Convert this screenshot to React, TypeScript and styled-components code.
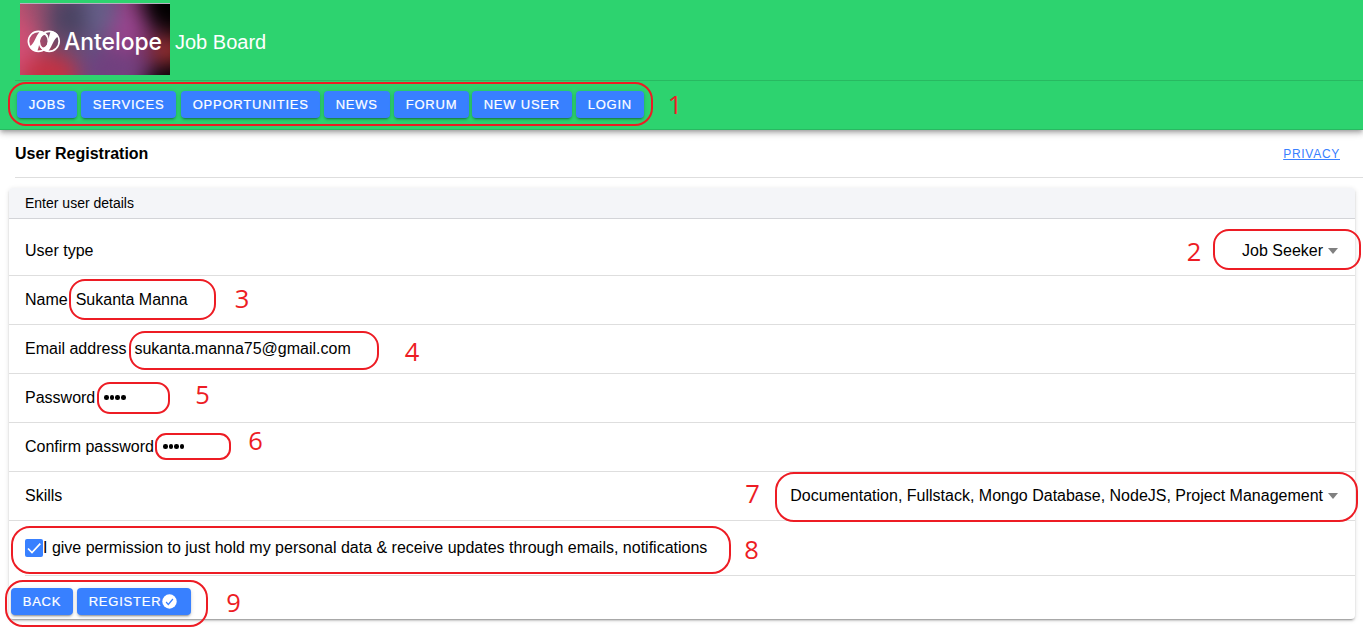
import React from 'react';
import styled, { createGlobalStyle } from 'styled-components';

const GlobalStyle = createGlobalStyle`
  * { box-sizing: border-box; }
  body {
    margin: 0;
    background: #fff;
    color: #000;
    font-family: "Liberation Sans", Arial, sans-serif;
    font-size: 16px;
    overflow: hidden;
  }
`;

const Page = styled.div`
  position: relative;
  display: flex;
  flex-direction: column;
  height: 637px;
  overflow: hidden;
`;

const Header = styled.header`
  background: #2dd36f;
  height: 130px;
  border-bottom: 1px solid #28b961;
  box-shadow: 0 2px 4px -1px rgba(0, 0, 0, 0.25), 0 4px 5px rgba(0, 0, 0, 0.14), 0 1px 10px rgba(0, 0, 0, 0.12);
`;

const Brand = styled.div`
  display: flex;
  align-items: center;
  height: 81px;
  margin-left: 15px;
  padding: 3px 0 5px 5px;
  border-bottom: 1px solid #28b961;
`;

const BrandTitle = styled.h1`
  margin: 6px 0 0 5px;
  color: #fff;
  font-size: 20px;
  font-weight: 400;
  line-height: 24px;
`;

const Nav = styled.nav`
  display: flex;
  padding: 10px 0 0 17px;
`;

const Button = styled.button<{ $width: number; $gap?: number }>`
  display: flex;
  align-items: center;
  justify-content: flex-start;
  width: ${(p) => p.$width}px;
  height: 27px;
  margin: 0 ${(p) => p.$gap ?? 4}px 0 0;
  padding: 0 0 0 11.7px;
  border: 0;
  border-radius: 4px;
  background: #3880ff;
  color: #fff;
  font: 400 13px "Liberation Sans", Arial, sans-serif;
  letter-spacing: 0.78px;
  -webkit-text-stroke: 0.2px #fff;
  white-space: nowrap;
  box-shadow: 0 3px 1px -2px rgba(0, 0, 0, 0.2), 0 2px 2px rgba(0, 0, 0, 0.14), 0 1px 5px rgba(0, 0, 0, 0.12);

  svg {
    margin-left: 1px;
  }
`;

const TitleBar = styled.div`
  display: flex;
  justify-content: space-between;
  align-items: center;
  height: 48px;
  margin-left: 15px;
  padding-right: 23px;
  border-bottom: 1px solid #dedede;
`;

const Title = styled.h2`
  margin: 0;
  font-size: 16px;
  font-weight: 700;
`;

const PrivacyLink = styled.a`
  color: #3880ff;
  font-size: 12px;
  letter-spacing: 0.72px;
  text-decoration: underline;
`;

const Card = styled.section`
  width: 1346px;
  height: 431px;
  margin: 10px 0 0 9px;
  border-radius: 4px;
  overflow: hidden;
  background: #fff;
  box-shadow: 0 3px 1px -2px rgba(0, 0, 0, 0.2), 0 2px 2px rgba(0, 0, 0, 0.14), 0 1px 5px rgba(0, 0, 0, 0.12);
`;

const CardHeader = styled.div`
  height: 31px;
  padding-left: 16px;
  border-bottom: 1px solid #d3d4d8;
  background: #f4f5f8;
  font-size: 14px;
  line-height: 31px;
`;

const Row = styled.div<{ $height?: number; $top?: number }>`
  display: flex;
  align-items: flex-start;
  height: ${(p) => p.$height ?? 49}px;
  padding: ${(p) => p.$top ?? 15}px 17px 0 16px;
  border-bottom: 1px solid #dedede;
  line-height: 18px;
  white-space: nowrap;
`;

const Value = styled.span<{ $gap: number }>`
  margin-left: ${(p) => p.$gap}px;
`;

const Select = styled.div`
  display: flex;
  align-items: center;
  margin-left: auto;
`;

const Caret = styled.span`
  margin-left: 5px;
  border: 5px solid transparent;
  border-top: 6px solid #808080;
  border-bottom: 0;
`;

const Dots = styled.span<{ $gap: number }>`
  display: flex;
  gap: 1px;
  margin: 6px 0 0 ${(p) => p.$gap}px;
`;

const Dot = styled.i`
  width: 4.6px;
  height: 4.6px;
  border-radius: 50%;
  background: #000;
`;

const Checkbox = styled.span`
  display: flex;
  width: 18px;
  height: 18px;
  border-radius: 2px;
  background: #3880ff;
`;

const ConsentRow = styled(Row)`
  margin-left: 16px;
  padding-left: 0;
`;

const Actions = styled.div`
  display: flex;
  padding: 12px 0 0 2px;
`;

const Outline = styled.div<{ $x: number; $y: number; $w: number; $h: number; $r: number }>`
  position: absolute;
  left: ${(p) => p.$x}px;
  top: ${(p) => p.$y}px;
  width: ${(p) => p.$w}px;
  height: ${(p) => p.$h}px;
  border: 2px solid #ed1c24;
  border-radius: ${(p) => p.$r}px;
  pointer-events: none;
`;

const Marker = styled.span<{ $x: number; $y: number }>`
  position: absolute;
  left: ${(p) => p.$x}px;
  top: ${(p) => p.$y}px;
  width: 20px;
  color: #ed1c24;
  font: 400 25.5px/30px "Open Sans", "Noto Sans", sans-serif;
  text-align: center;
`;

const Logo = () => (
  <svg width="150" height="72" viewBox="0 0 150 72">
    <defs>
      <linearGradient id="base" x1="0" y1="0" x2="1" y2="0">
        <stop offset="0" stopColor="#b55270" />
        <stop offset="0.25" stopColor="#704a6b" />
        <stop offset="0.5" stopColor="#655080" />
        <stop offset="0.7" stopColor="#8a3d7c" />
        <stop offset="0.85" stopColor="#6a2c58" />
        <stop offset="1" stopColor="#37121e" />
      </linearGradient>
      <filter id="soft" filterUnits="userSpaceOnUse" x="-60" y="-60" width="270" height="192" colorInterpolationFilters="sRGB">
        <feGaussianBlur stdDeviation="10" />
      </filter>
      <clipPath id="frame"><rect width="150" height="72" /></clipPath>
    </defs>
    <g clipPath="url(#frame)">
      <rect width="150" height="72" fill="url(#base)" />
      <g filter="url(#soft)">
        <ellipse cx="-2" cy="45" rx="18" ry="30" fill="#d14f75" />
        <ellipse cx="30" cy="74" rx="28" ry="24" fill="#c43244" />
        <ellipse cx="52" cy="14" rx="18" ry="20" fill="#474260" />
        <ellipse cx="80" cy="10" rx="16" ry="22" fill="#655f88" />
        <ellipse cx="106" cy="26" rx="14" ry="20" fill="#98458f" />
        <ellipse cx="95" cy="66" rx="32" ry="18" fill="#70407f" />
        <ellipse cx="150" cy="0" rx="26" ry="26" fill="#000" />
        <ellipse cx="148" cy="48" rx="16" ry="10" fill="#b83a34" />
        <ellipse cx="154" cy="78" rx="28" ry="16" fill="#08030a" />
      </g>
      <rect width="150" height="1" fill="#b8b0c0" />
    </g>
    <g fill="none" stroke="#fff">
      <circle cx="18.4" cy="38.3" r="10" strokeWidth="1.7" />
      <circle cx="29.2" cy="38.3" r="10" strokeWidth="1.7" />
    </g>
    <g fill="#fff">
      <path d="M9.5 43.5C15 40 15 34 20 28.2C24 28.5 27.5 30.5 28.5 34C26 31.5 24 31.5 22 33.5C18.5 37.5 20 43.5 17 48.5C13.5 48 10.5 46.5 9.5 43.5Z" />
      <path d="M38.5 33C33 36.5 33 42.5 28 48.4C24 48 20.5 46 19.5 42.5C22 45 24 45 26 43C29.5 39 28 33 31 28.2C34.5 28.5 37.5 30 38.5 33Z" />
    </g>
    <text x="44" y="47" fill="#fff" fontFamily="Inter, sans-serif" fontSize="24" fontWeight="500" textLength="98" lengthAdjust="spacingAndGlyphs">Antelope</text>
  </svg>
);

const navItems = [
  { label: 'JOBS', width: 60 },
  { label: 'SERVICES', width: 95, gap: 5 },
  { label: 'OPPORTUNITIES', width: 139 },
  { label: 'NEWS', width: 66 },
  { label: 'FORUM', width: 75, gap: 3 },
  { label: 'NEW USER', width: 100 },
  { label: 'LOGIN', width: 68 },
];

const callouts = [
  { x: 8, y: 82, w: 645, h: 44, r: 18, mx: 665, my: 89 },
  { x: 1213, y: 229, w: 148, h: 41, r: 16, mx: 1184, my: 236 },
  { x: 69, y: 279, w: 147, h: 41, r: 16, mx: 232, my: 283 },
  { x: 129, y: 331, w: 250, h: 39, r: 16, mx: 402, my: 336 },
  { x: 97, y: 382, w: 73, h: 32, r: 13, mx: 192.5, my: 379 },
  { x: 155, y: 433, w: 76, h: 27, r: 11, mx: 245.5, my: 425 },
  { x: 775, y: 472, w: 583, h: 50, r: 19, mx: 742.5, my: 478 },
  { x: 11, y: 526, w: 720, h: 48, r: 19, mx: 741.5, my: 534 },
  { x: 5, y: 580, w: 203, h: 47, r: 18, mx: 223.5, my: 587 },
];

const PasswordDots = ({ gap }: { gap: number }) => (
  <Dots $gap={gap}><Dot /><Dot /><Dot /><Dot /></Dots>
);

export default function App() {
  return (
    <Page>
      <GlobalStyle />
      <Header>
        <Brand>
          <Logo />
          <BrandTitle>Job Board</BrandTitle>
        </Brand>
        <Nav>
          {navItems.map((n) => (
            <Button key={n.label} $width={n.width} $gap={n.gap}>{n.label}</Button>
          ))}
        </Nav>
      </Header>
      <TitleBar>
        <Title>User Registration</Title>
        <PrivacyLink>PRIVACY</PrivacyLink>
      </TitleBar>
      <Card>
        <CardHeader>Enter user details</CardHeader>
        <Row $height={57} $top={23}>
          User type
          <Select>Job Seeker<Caret /></Select>
        </Row>
        <Row>Name<Value $gap={8}>Sukanta Manna</Value></Row>
        <Row>Email address<Value $gap={8}>sukanta.manna75@gmail.com</Value></Row>
        <Row>Password<PasswordDots gap={9} /></Row>
        <Row>Confirm password<PasswordDots gap={9} /></Row>
        <Row>
          Skills
          <Select>Documentation, Fullstack, Mongo Database, NodeJS, Project Management<Caret /></Select>
        </Row>
        <ConsentRow $height={55} $top={18}>
          <Checkbox>
            <svg width="18" height="18" viewBox="0 0 18 18" fill="none" stroke="#fff" strokeWidth="1.7">
              <path d="M3 9.5l4 4L15.3 4.7" />
            </svg>
          </Checkbox>
          <span>I give permission to just hold my personal data &amp; receive updates through emails, notifications</span>
        </ConsentRow>
        <Actions>
          <Button $width={62}>BACK</Button>
          <Button $width={114}>
            REGISTER
            <svg width="15" height="15" viewBox="0 0 15 15" fill="none">
              <circle cx="7.5" cy="7.5" r="7.2" fill="#fff" />
              <path d="M4.1 8l2.2 2.5 4.6-5.5" stroke="#3880ff" strokeWidth="1.2" />
            </svg>
          </Button>
        </Actions>
      </Card>
      {callouts.map((c, i) => (
        <React.Fragment key={i}>
          <Outline $x={c.x} $y={c.y} $w={c.w} $h={c.h} $r={c.r} />
          <Marker $x={c.mx} $y={c.my}>{i + 1}</Marker>
        </React.Fragment>
      ))}
    </Page>
  );
}
